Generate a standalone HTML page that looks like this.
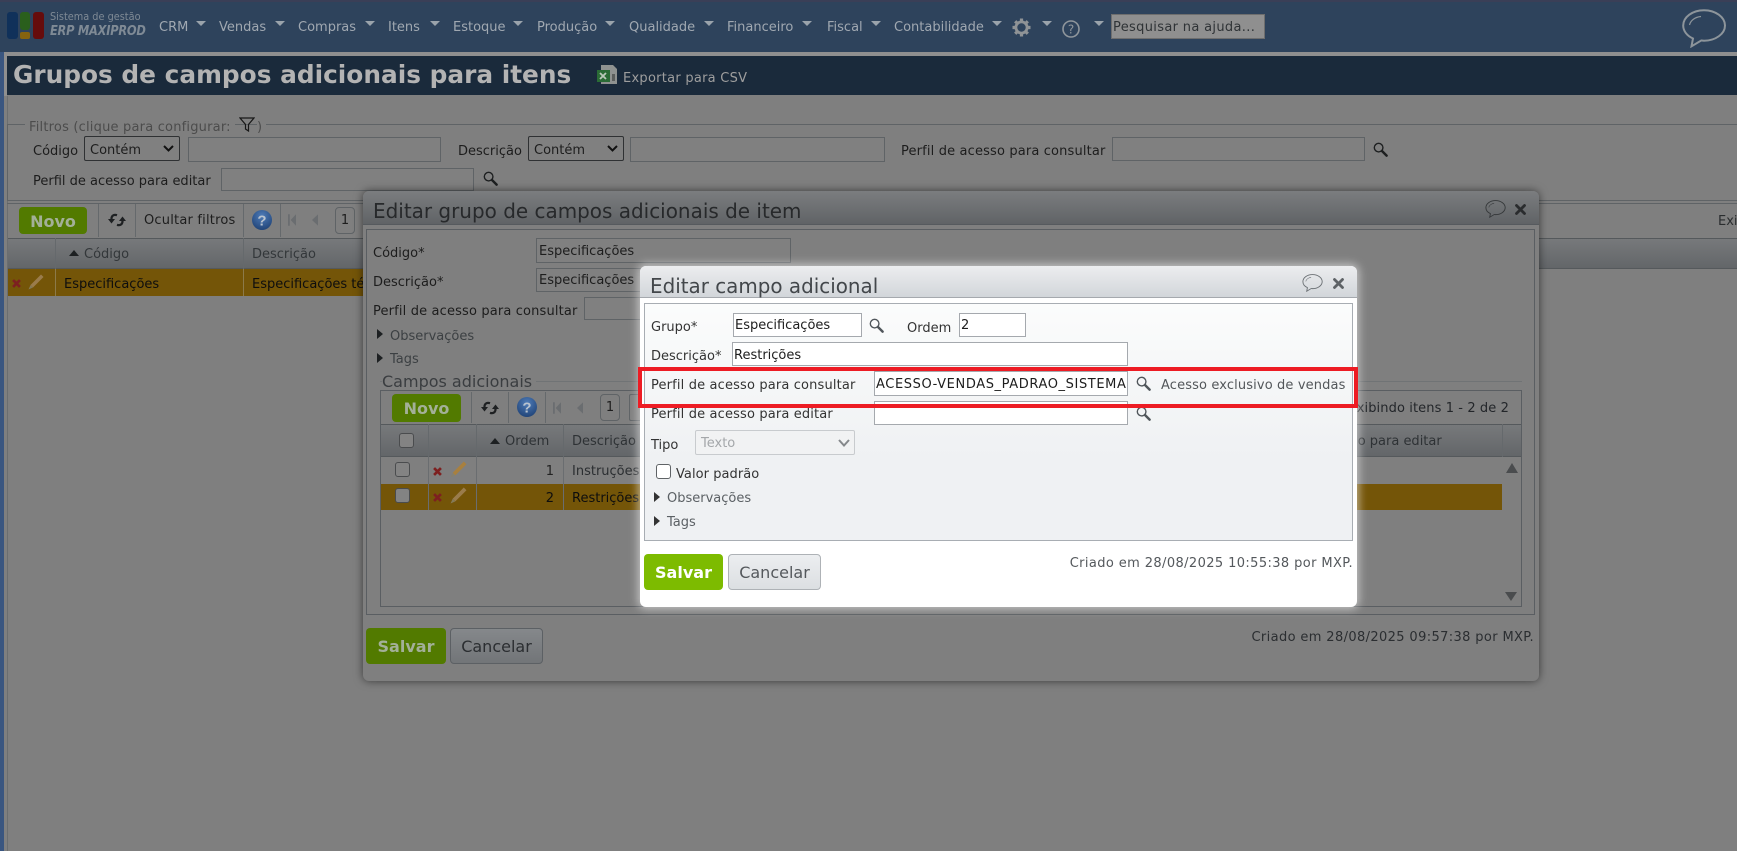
<!DOCTYPE html>
<html lang="pt-BR"><head><meta charset="utf-8"><title>Grupos de campos adicionais para itens</title>
<style>
*{box-sizing:border-box}
html,body{margin:0;padding:0;width:1737px;height:851px;overflow:hidden;background:#7f7f7f}
body{position:relative;font:13px/20px "DejaVu Sans","Liberation Sans",sans-serif;color:#1d1d1d}
.a,.t,.i,svg.s{position:absolute}
.t{white-space:nowrap;height:20px;line-height:20px;margin-top:2px}
.i{background:#808080;border:1px solid #5f6366}
.w{background:#fff;border:1px solid #a5a9ae;color:#222}
.m{color:#a0a8b1}
.c{width:0;height:0;border-left:5.5px solid transparent;border-right:5.5px solid transparent;border-top:5px solid #9aa3ab;position:absolute;top:21px}
.sep{position:absolute;width:1px;background:#65696c}
.b{position:absolute;border-radius:4px;text-align:center;font-weight:bold;white-space:nowrap}
</style></head><body>
<svg width="0" height="0" style="position:absolute"><defs>
<symbol id="lupa" viewBox="0 0 16 16"><circle cx="6" cy="6" r="4.6" fill="none" stroke="currentColor" stroke-width="1.5"/><path d="M9.6 9.6 14.5 14.5" stroke="currentColor" stroke-width="2.6" stroke-linecap="round"/></symbol>
<symbol id="chat" viewBox="0 0 44 39"><path d="M22 1.2C10.500 1.200 1.200 8 1.200 16.500c0 5.500 3.800 10.300 9.800 13l-1.500 7.800 9.700-5.800c1 .1 1.800.2 2.800.2 11.500 0 21-6.800 21-15.200S33.500 1.200 22 1.200z" fill="none" stroke="currentColor" stroke-width="2"/><path d="M7.500 16C8.500 11.500 13 8 19 7.500" fill="none" stroke="currentColor" stroke-width="1.200"/></symbol>
<symbol id="x" viewBox="0 0 11 11"><path d="M1.500 1.500 9.500 9.500M9.500 1.500 1.500 9.500" stroke="currentColor" stroke-width="2.800" stroke-linecap="round"/></symbol>
<symbol id="redx" viewBox="0 0 10 10"><path d="M1.200 1.200 8.800 8.800M8.800 1.200 1.200 8.800" stroke="#7d2020" stroke-width="3"/></symbol>
<symbol id="pen" viewBox="0 0 16 16"><path d="M13 .5 15.500 3 5 13.500 2.500 11z" fill="#a8803f"/><path d="M2.500 11 5 13.500 .5 15.500z" fill="#85806f"/></symbol>
<symbol id="pen2" viewBox="0 0 16 16"><path d="M13 .5 15.500 3 5 13.500 2.500 11z" fill="#9a7c4c"/><path d="M2.500 11 5 13.500 .5 15.500z" fill="#857a58"/></symbol>
<symbol id="ref" viewBox="0 0 18 14"><path d="M9 2.200C5.500 1 3.200 3 3.500 6.500M9 11.800C12.500 13 14.800 11 14.500 7.500" fill="none" stroke="#1e2022" stroke-width="2.200"/><path d="M0 6H7L3.500 10.500zM11 8H18L14.500 3.500z" fill="#1e2022"/></symbol>
<symbol id="help" viewBox="0 0 20 20"><defs><radialGradient id="hg" cx=".5" cy=".3" r=".8"><stop offset="0" stop-color="#4f7cb8"/><stop offset="1" stop-color="#1b3d70"/></radialGradient></defs><circle cx="10" cy="10" r="10" fill="url(#hg)"/><text x="10" y="15.500" text-anchor="middle" font-family="Liberation Sans" font-weight="bold" font-size="15" fill="#b9c3cf">?</text></symbol>
<symbol id="first" viewBox="0 0 9 13"><path d="M0 0h2v13H0zM9 0v13L3 6.500z" fill="#6a6d70"/></symbol>
<symbol id="prev" viewBox="0 0 7 13"><path d="M7 0v13L0 6.500z" fill="#6a6d70"/></symbol>
</defs></svg>

<!-- background page -->
<div class="a" style="left:0;top:0;width:4px;height:851px;background:#3a5680"></div>
<div class="a" style="left:7px;top:96px;width:1px;height:755px;background:#6b6e70"></div>
<div class="a" style="left:0;top:0;width:1737px;height:52px;background:#2e435c;border-top:2px solid #3a3f57"></div>
<div class="a" style="left:4px;top:52px;width:1733px;height:4px;background:#8f8f8f"></div>
<div class="a" style="left:4px;top:52px;width:3px;height:44px;background:#8f8f8f"></div>
<div class="a" style="left:7px;top:56px;width:1730px;height:39px;background:#1a2a3b"></div>

<!-- logo -->
<div class="a" style="left:7px;top:12px;width:11px;height:27px;background:#10315a;border-radius:3px"></div>
<div class="a" style="left:20px;top:12px;width:10px;height:18px;background:#2a5f1c;border-radius:3px"></div>
<div class="a" style="left:20px;top:32px;width:10px;height:7px;background:#86630f;border-radius:2px"></div>
<div class="a" style="left:33px;top:12px;width:11px;height:27px;background:#660c0c;border-radius:3px"></div>
<div class="t" style="left:50px;top:5px;font-size:11px;color:#7f8a95;transform:scaleX(.885);transform-origin:0 0">Sistema de gestão</div>
<div class="t" style="left:50px;top:20px;font:italic bold 13px/20px 'DejaVu Sans',sans-serif;letter-spacing:-.3px;color:#7f8a95;transform:scaleX(.88);transform-origin:0 0">ERP MAXIPROD</div>

<!-- menu -->
<div class="t m" style="left:159px;top:16px">CRM</div><i class="c" style="left:196px"></i>
<div class="t m" style="left:219px;top:16px">Vendas</div><i class="c" style="left:275px"></i>
<div class="t m" style="left:298px;top:16px">Compras</div><i class="c" style="left:365px"></i>
<div class="t m" style="left:388px;top:16px">Itens</div><i class="c" style="left:430px"></i>
<div class="t m" style="left:453px;top:16px">Estoque</div><i class="c" style="left:513px"></i>
<div class="t m" style="left:537px;top:16px">Produção</div><i class="c" style="left:605px"></i>
<div class="t m" style="left:629px;top:16px">Qualidade</div><i class="c" style="left:704px"></i>
<div class="t m" style="left:727px;top:16px">Financeiro</div><i class="c" style="left:802px"></i>
<div class="t m" style="left:827px;top:16px">Fiscal</div><i class="c" style="left:871px"></i>
<div class="t m" style="left:894px;top:16px">Contabilidade</div><i class="c" style="left:992px"></i>
<svg class="s" style="left:1012px;top:18px" width="19" height="19" viewBox="0 0 19 19"><g stroke="#8f9396" stroke-width="3.200"><path d="M9.500 .5v18M.5 9.500h18M3.200 3.200l12.600 12.600M15.800 3.200 3.200 15.800"/></g><circle cx="9.500" cy="9.500" r="5.600" fill="#2e435c" stroke="#8f9396" stroke-width="2.800"/></svg>
<i class="c" style="left:1042px"></i>
<svg class="s" style="left:1062px;top:20px" width="18" height="18" viewBox="0 0 18 18"><circle cx="9" cy="9" r="8" fill="none" stroke="#8f969c" stroke-width="1.600"/><text x="9" y="13.500" text-anchor="middle" font-family="DejaVu Sans" font-size="12" fill="#8f969c">?</text></svg>
<i class="c" style="left:1094px"></i>
<div class="a" style="left:1111px;top:14px;width:154px;height:25px;background:#8f8f8f;border:1px solid #6e6e6e"></div>
<div class="t" style="left:1113px;top:16px;color:#2f3336;letter-spacing:.33px">Pesquisar na ajuda...</div>
<svg class="s" style="left:1682px;top:9px;color:#8d959b" width="44" height="39"><use href="#chat"/></svg>

<!-- title -->
<div class="t" style="left:13px;top:60px;margin-top:0;height:30px;line-height:30px;font-size:25px;font-weight:bold;color:#b3b3b3;transform:scaleX(.992);transform-origin:0 0">Grupos de campos adicionais para itens</div>
<svg class="s" style="left:597px;top:65px" width="21" height="19" viewBox="0 0 21 19"><path d="M4 0h12l4 4v15H4z" fill="#8f9290"/><path d="M15 9h3v7h-3z" fill="#5b5e5c"/><rect x="0" y="5" width="13" height="12" fill="#2a6b35"/><path d="M3 8l6 6M9 8l-6 6" stroke="#b9c8b9" stroke-width="1.800"/></svg>
<div class="t" style="left:623px;top:67px;color:#9e9e9e;letter-spacing:.26px">Exportar para CSV</div>

<!-- filters -->
<div class="a" style="left:7px;top:124px;width:1730px;height:1px;background:#5f6366"></div>
<div class="a" style="left:7px;top:124px;width:1px;height:76px;background:#5f6366"></div>
<div class="a" style="left:7px;top:200px;width:1730px;height:1px;background:#5f6366"></div>
<div class="a" style="left:7px;top:203px;width:1730px;height:1px;background:#5f6366"></div>
<div class="t" style="left:25px;top:116px;padding:0 4px;background:#7f7f7f;color:#4c4c4c;letter-spacing:.2px">Filtros (clique para configurar:</div>
<svg class="s" style="left:239px;top:117px" width="16" height="15" viewBox="0 0 16 15"><path d="M1 1h14L9.500 7.500V14L6.500 12V7.500z" fill="none" stroke="#171717" stroke-width="1.200"/></svg>
<div class="t" style="left:257px;top:116px;padding-right:4px;background:#7f7f7f;color:#4c4c4c">)</div>
<div class="t" style="left:33px;top:140px">Código</div>
<div class="i" style="left:84px;top:136px;width:96px;height:25px;border-color:#2f3133;border-radius:2px"></div>
<div class="t" style="left:90px;top:139px">Contém</div>
<svg class="s" style="left:163px;top:145px" width="11" height="7" viewBox="0 0 11 7"><path d="M1 1 5.500 5.500 10 1" fill="none" stroke="#111" stroke-width="2"/></svg>
<div class="i" style="left:188px;top:137px;width:253px;height:25px"></div>
<div class="t" style="left:458px;top:140px">Descrição</div>
<div class="i" style="left:528px;top:136px;width:96px;height:25px;border-color:#2f3133;border-radius:2px"></div>
<div class="t" style="left:534px;top:139px">Contém</div>
<svg class="s" style="left:607px;top:145px" width="11" height="7" viewBox="0 0 11 7"><path d="M1 1 5.500 5.500 10 1" fill="none" stroke="#111" stroke-width="2"/></svg>
<div class="i" style="left:630px;top:137px;width:255px;height:25px"></div>
<div class="t" style="left:901px;top:140px;letter-spacing:.15px">Perfil de acesso para consultar</div>
<div class="i" style="left:1112px;top:137px;width:253px;height:24px"></div>
<svg class="s" style="left:1373px;top:142px;color:#1d1f20" width="15" height="15"><use href="#lupa"/></svg>
<div class="t" style="left:33px;top:170px">Perfil de acesso para editar</div>
<div class="i" style="left:221px;top:168px;width:253px;height:23px"></div>
<svg class="s" style="left:483px;top:171px;color:#1d1f20" width="15" height="15"><use href="#lupa"/></svg>

<!-- toolbar -->
<div class="b" style="left:19px;top:207px;width:68px;height:27px;line-height:29px;font-size:16px;background:#527a00;color:#a3b098">Novo</div>
<div class="sep" style="left:98px;top:204px;height:33px"></div>
<svg class="s" style="left:108px;top:213px" width="18" height="14"><use href="#ref"/></svg>
<div class="sep" style="left:135px;top:204px;height:33px"></div>
<div class="t" style="left:144px;top:209px;letter-spacing:.2px">Ocultar filtros</div>
<div class="sep" style="left:243px;top:204px;height:33px"></div>
<svg class="s" style="left:252px;top:210px" width="20" height="20"><use href="#help"/></svg>
<div class="sep" style="left:280px;top:204px;height:33px"></div>
<svg class="s" style="left:288px;top:214px" width="8" height="12"><use href="#first"/></svg>
<svg class="s" style="left:312px;top:214px" width="6" height="12"><use href="#prev"/></svg>
<div class="a" style="left:335px;top:207px;width:20px;height:27px;border:1px solid #5f6366;border-radius:4px;text-align:center;line-height:26px">1</div>
<div class="t" style="left:1718px;top:210px;color:#2a2d2f">Exi</div>

<!-- table -->
<div class="a" style="left:8px;top:238px;width:1729px;height:31px;background:linear-gradient(#77797b,#636669);border-top:1px solid #55595c;border-bottom:1px solid #55595c"></div>
<div class="sep" style="left:55px;top:238px;height:31px"></div>
<div class="sep" style="left:243px;top:238px;height:31px"></div>
<div class="a" style="left:69px;top:250px;width:0;height:0;border-left:5px solid transparent;border-right:5px solid transparent;border-bottom:6px solid #1d2022"></div>
<div class="t" style="left:84px;top:243px;color:#33373a">Código</div>
<div class="t" style="left:252px;top:243px;color:#33373a">Descrição</div>
<div class="a" style="left:8px;top:269px;width:1000px;height:27px;background:#745508"></div>
<div class="sep" style="left:55px;top:269px;height:27px;background:#8c7a4a"></div>
<div class="sep" style="left:243px;top:269px;height:27px;background:#8c7a4a"></div>
<svg class="s" style="left:12px;top:279px" width="9" height="9"><use href="#redx"/></svg>
<svg class="s" style="left:28px;top:274px" width="16" height="16"><use href="#pen2"/></svg>
<div class="t" style="left:64px;top:273px;color:#0e0e0e">Especificações</div>
<div class="t" style="left:252px;top:273px;color:#0e0e0e">Especificações técnicas</div>

<!-- dialog 1 -->
<div class="a" style="left:363px;top:191px;width:1176px;height:490px;background:#7f7f7f;border-radius:6px;box-shadow:0 0 9px rgba(0,0,0,.55)"></div>
<div class="a" style="left:363px;top:191px;width:1176px;height:34px;background:linear-gradient(#7b7d7f,#606366);border-radius:6px 6px 0 0;border-bottom:1px solid #565a5e"></div>
<div class="t" style="left:373px;top:201px;margin-top:0;font-size:20px;color:#27292b;transform:scaleX(.998);transform-origin:0 0">Editar grupo de campos adicionais de item</div>
<svg class="s" style="left:1485px;top:200px;color:#35383a" width="21" height="18"><use href="#chat"/></svg>
<svg class="s" style="left:1515px;top:204px;color:#2a2c2e" width="11" height="11"><use href="#x"/></svg>
<div class="a" style="left:366px;top:229px;width:1169px;height:386px;border:1px solid #5a5e62"></div>
<div class="t" style="left:373px;top:242px;color:#1d1d1d">Código*</div>
<div class="i" style="left:536px;top:238px;width:255px;height:25px"></div>
<div class="t" style="left:539px;top:240px">Especificações</div>
<div class="t" style="left:373px;top:271px">Descrição*</div>
<div class="i" style="left:536px;top:268px;width:255px;height:24px"></div>
<div class="t" style="left:539px;top:269px">Especificações</div>
<div class="t" style="left:373px;top:300px;letter-spacing:.15px">Perfil de acesso para consultar</div>
<div class="i" style="left:584px;top:297px;width:100px;height:23px"></div>
<div class="a" style="left:377px;top:329px;border-top:5px solid transparent;border-bottom:5px solid transparent;border-left:6px solid #1d2022"></div>
<div class="t" style="left:390px;top:325px;color:#3c4043">Observações</div>
<div class="a" style="left:377px;top:353px;border-top:5px solid transparent;border-bottom:5px solid transparent;border-left:6px solid #1d2022"></div>
<div class="t" style="left:390px;top:348px;color:#3c4043">Tags</div>
<div class="a" style="left:380px;top:381px;width:1142px;height:1px;background:#707375"></div>
<div class="t" style="left:382px;top:370px;font-size:16px;padding-right:4px;background:#7f7f7f;color:#3a3d40">Campos adicionais</div>
<div class="a" style="left:380px;top:390px;width:1142px;height:217px;border:1px solid #5a5e62"></div>
<div class="b" style="left:392px;top:394px;width:69px;height:28px;line-height:30px;font-size:16px;background:#527a00;color:#a3b098">Novo</div>
<div class="sep" style="left:471px;top:392px;height:31px"></div>
<svg class="s" style="left:481px;top:401px" width="18" height="14"><use href="#ref"/></svg>
<div class="sep" style="left:508px;top:392px;height:31px"></div>
<svg class="s" style="left:517px;top:397px" width="20" height="20"><use href="#help"/></svg>
<div class="sep" style="left:545px;top:392px;height:31px"></div>
<svg class="s" style="left:553px;top:402px" width="8" height="12"><use href="#first"/></svg>
<svg class="s" style="left:577px;top:402px" width="6" height="12"><use href="#prev"/></svg>
<div class="a" style="left:600px;top:394px;width:20px;height:27px;border:1px solid #5f6366;border-radius:4px;text-align:center;line-height:26px">1</div>
<div class="a" style="left:629px;top:394px;width:20px;height:27px;border:1px solid #5f6366;border-radius:2px"></div>
<div class="t" style="right:228px;top:397px;color:#23262a;letter-spacing:.1px">Exibindo itens 1 - 2 de 2</div>
<div class="a" style="left:381px;top:424px;width:1140px;height:33px;background:linear-gradient(#77797b,#636669);border-top:1px solid #55595c;border-bottom:1px solid #55595c"></div>
<div class="sep" style="left:428px;top:424px;height:86px"></div>
<div class="sep" style="left:476px;top:424px;height:86px"></div>
<div class="sep" style="left:563px;top:424px;height:86px"></div>
<div class="sep" style="left:1502px;top:424px;height:33px"></div>
<div class="a" style="left:399px;top:433px;width:15px;height:15px;background:#838383;border:1.5px solid #4a4c4e;border-radius:3px"></div>
<div class="a" style="left:490px;top:438px;width:0;height:0;border-left:5px solid transparent;border-right:5px solid transparent;border-bottom:6px solid #1d2022"></div>
<div class="t" style="left:505px;top:430px;color:#2e3235">Ordem</div>
<div class="t" style="left:572px;top:430px;color:#2e3235">Descrição</div>
<div class="t" style="left:1264px;top:430px;color:#2e3235">Perfil de acesso para editar</div>
<div class="a" style="left:381px;top:457px;width:1140px;height:27px;background:#7f7f7f"></div>
<div class="a" style="left:381px;top:484px;width:1121px;height:26px;background:#745508"></div>
<div class="sep" style="left:428px;top:457px;height:53px;background:#6a6d70"></div>
<div class="sep" style="left:476px;top:457px;height:53px;background:#6a6d70"></div>
<div class="sep" style="left:563px;top:457px;height:53px;background:#6a6d70"></div>
<div class="a" style="left:395px;top:462px;width:15px;height:15px;background:#838383;border:1.5px solid #4a4c4e;border-radius:3px"></div>
<div class="a" style="left:395px;top:488px;width:15px;height:15px;background:#838383;border:1.5px solid #4a4c4e;border-radius:3px"></div>
<svg class="s" style="left:433px;top:467px" width="9" height="9"><use href="#redx"/></svg>
<svg class="s" style="left:450px;top:461px" width="17" height="17"><use href="#pen"/></svg>
<svg class="s" style="left:433px;top:493px" width="9" height="9"><use href="#redx"/></svg>
<svg class="s" style="left:450px;top:487px" width="17" height="17"><use href="#pen2"/></svg>
<div class="t" style="right:1183px;top:460px;color:#222">1</div>
<div class="t" style="right:1183px;top:487px;color:#0e0e0e">2</div>
<div class="t" style="left:572px;top:460px;color:#2b2e31">Instruções</div>
<div class="t" style="left:572px;top:487px;color:#0e0e0e">Restrições</div>
<div class="a" style="left:1506px;top:463px;width:0;height:0;border-left:6px solid transparent;border-right:6px solid transparent;border-bottom:10px solid #4a4c4e"></div>
<div class="a" style="left:1505px;top:592px;width:0;height:0;border-left:6.5px solid transparent;border-right:6.5px solid transparent;border-top:9px solid #4a4c4e"></div>
<div class="b" style="left:366px;top:628px;width:80px;height:36px;line-height:38px;font-size:16px;background:#527a00;color:#a3b098">Salvar</div>
<div class="a" style="left:450px;top:628px;width:93px;height:36px;line-height:36px;font-size:16px;text-align:center;background:linear-gradient(#85888b,#727578);border:1px solid #5c6064;border-radius:4px;color:#2b2e31">Cancelar</div>
<div class="t" style="right:203px;top:626px;color:#2b2e31;letter-spacing:.37px">Criado em 28/08/2025 09:57:38 por MXP.</div>

<!-- dialog 2 -->
<div class="a" style="left:640px;top:266px;width:717px;height:341px;background:#fff;border-radius:6px;box-shadow:0 0 9px 2px rgba(255,255,255,.55)"></div>
<div class="a" style="left:640px;top:266px;width:717px;height:32px;background:linear-gradient(#ecedef,#d2d6da);border-radius:6px 6px 0 0;border-bottom:1px solid #a5a9ae"></div>
<div class="t" style="left:650px;top:276px;margin-top:0;font-size:20px;color:#43474b;transform:scaleX(.995);transform-origin:0 0">Editar campo adicional</div>
<svg class="s" style="left:1302px;top:274px;color:#6b7074" width="21" height="18"><use href="#chat"/></svg>
<svg class="s" style="left:1333px;top:278px;color:#5e6266" width="11" height="11"><use href="#x"/></svg>
<div class="a" style="left:644px;top:303px;width:709px;height:238px;background:linear-gradient(#fbfcfc,#eff1f3 65%);border:1px solid #a8adb3"></div>

<div class="t" style="left:651px;top:316px;color:#333">Grupo*</div>
<div class="i w" style="left:733px;top:313px;width:129px;height:24px"></div>
<div class="t" style="left:735px;top:314px">Especificações</div>
<svg class="s" style="left:869px;top:318px;color:#50565b" width="15" height="15"><use href="#lupa"/></svg>
<div class="t" style="left:907px;top:317px;color:#333">Ordem</div>
<div class="i w" style="left:959px;top:313px;width:67px;height:24px"></div>
<div class="t" style="left:961px;top:314px">2</div>

<div class="t" style="left:651px;top:345px;color:#333">Descrição*</div>
<div class="i w" style="left:732px;top:342px;width:396px;height:24px"></div>
<div class="t" style="left:734px;top:344px">Restrições</div>

<div class="t" style="left:651px;top:374px;color:#333;letter-spacing:.15px">Perfil de acesso para consultar</div>
<div class="i w" style="left:874px;top:371px;width:254px;height:25px"></div>
<div class="t" style="left:876px;top:373px;width:251px;overflow:hidden;letter-spacing:.6px">ACESSO-VENDAS_PADRAO_SISTEMA</div>
<svg class="s" style="left:1136px;top:376px;color:#50565b" width="15" height="15"><use href="#lupa"/></svg>
<div class="t" style="left:1161px;top:374px;color:#52565a;letter-spacing:.13px">Acesso exclusivo de vendas</div>

<div class="t" style="left:651px;top:403px;color:#333;letter-spacing:.15px">Perfil de acesso para editar</div>
<div class="i w" style="left:874px;top:401px;width:254px;height:24px"></div>
<svg class="s" style="left:1136px;top:406px;color:#50565b" width="15" height="15"><use href="#lupa"/></svg>

<div class="t" style="left:651px;top:434px;color:#333">Tipo</div>
<div class="a" style="left:695px;top:430px;width:160px;height:25px;background:#f1f2f3;border:1px solid #c8cbce;border-radius:2px"></div>
<div class="t" style="left:701px;top:432px;color:#a4a7aa">Texto</div>
<svg class="s" style="left:838px;top:439px" width="12" height="8" viewBox="0 0 12 8"><path d="M1 1 6 6.500 11 1" fill="none" stroke="#85888b" stroke-width="2"/></svg>

<div class="a" style="left:656px;top:464px;width:15px;height:15px;background:#fff;border:1.5px solid #5f6366;border-radius:3px"></div>
<div class="t" style="left:676px;top:463px;color:#333;letter-spacing:.05px">Valor padrão</div>
<div class="a" style="left:654px;top:492px;border-top:5px solid transparent;border-bottom:5px solid transparent;border-left:6px solid #333"></div>
<div class="t" style="left:667px;top:487px;color:#5b6064">Observações</div>
<div class="a" style="left:654px;top:516px;border-top:5px solid transparent;border-bottom:5px solid transparent;border-left:6px solid #333"></div>
<div class="t" style="left:667px;top:511px;color:#5b6064">Tags</div>

<div class="b" style="left:644px;top:554px;width:79px;height:36px;line-height:38px;font-size:16px;background:#7dbb00;color:#fff">Salvar</div>
<div class="a" style="left:728px;top:554px;width:93px;height:36px;line-height:36px;font-size:16px;text-align:center;background:linear-gradient(#eceef0,#dcdfe2);border:1px solid #aeb2b6;border-radius:4px;color:#54585c">Cancelar</div>
<div class="t" style="right:384px;top:552px;color:#54585c;letter-spacing:.39px">Criado em 28/08/2025 10:55:38 por MXP.</div>

<div class="a" style="left:638px;top:367px;width:720px;height:41px;border:4px solid #ed1c24"></div>
</body></html>
